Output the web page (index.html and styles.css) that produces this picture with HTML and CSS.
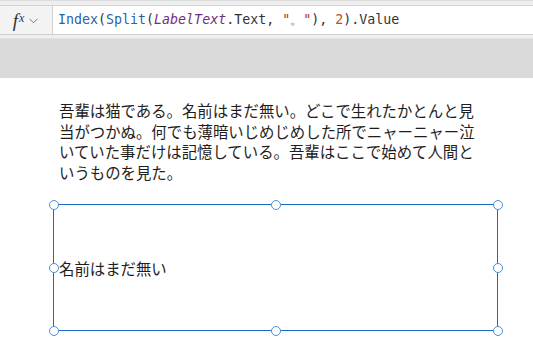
FILE: index.html
```html
<!DOCTYPE html>
<html lang="ja">
<head>
  <meta charset="UTF-8" />
  <meta name="viewport" content="width=device-width, initial-scale=1.0"/>
  <title>Formula</title>
  <link rel="stylesheet" href="styles.css">
</head>
<body>
  <div class="top-strip"></div>

  <div class="formula-bar">
    <div class="fx-button">
      <span class="fx"><span class="fx-f">f</span><span class="fx-x">x</span></span>
      <svg class="chevron" width="9" height="6" viewBox="0 0 9 6">
        <path d="M0.5 0.8 L4.5 4.8 L8.5 0.8" fill="none" stroke="#777" stroke-width="1"/>
      </svg>
    </div>
    <div class="formula-input">
      <span class="fn">Index</span>(<span class="fn">Split</span>(<span class="ctl">LabelText</span>.Text, <span class="str">"。"</span>), <span class="num">2</span>).Value
    </div>
  </div>

  <div class="gap-strip"></div>
  <div class="toolbar-area"></div>

  <div class="canvas">
    <p class="label-text">吾輩は猫である。名前はまだ無い。どこで生れたかとんと見当がつかぬ。何でも薄暗いじめじめした所でニャーニャー泣いていた事だけは記憶している。吾輩はここで始めて人間というものを見た。</p>

    <div class="selected-label">
      <span class="label-value">名前はまだ無い</span>
      <span class="handle tl"></span>
      <span class="handle tc"></span>
      <span class="handle tr"></span>
      <span class="handle ml"></span>
      <span class="handle mr"></span>
      <span class="handle bl"></span>
      <span class="handle bc"></span>
      <span class="handle br"></span>
    </div>
  </div>
</body>
</html>
```

FILE: styles.css
```css
html, body {
  height: 100%;
}
body {
  margin: 0;
  background: #fff;
  font-family: "Noto Sans CJK JP", "Noto Sans", sans-serif;
  color: #222;
}
.top-strip {
  height: 4px;
  background: #efefef;
  border-top: 1px solid #dcdcdc;
  border-bottom: 1px solid #d4d4d4;
}
.formula-bar {
  display: flex;
  height: 28px;
  background: #f3f3f3;
  border-bottom: 1px solid #d0d0d0;
}
.fx-button {
  width: 52px;
  display: flex;
  align-items: center;
  justify-content: center;
  gap: 5px;
  padding-right: 1px;
  box-sizing: border-box;
}
.fx {
  display: flex;
  align-items: flex-start;
  font-family: "Liberation Serif", serif;
  font-style: italic;
  color: #333;
  line-height: 1;
}
.fx-f {
  font-size: 19px;
}
.fx-x {
  font-size: 12px;
  margin-left: 1px;
  margin-top: 1px;
}
.chevron {
  margin-top: 1px;
}
.formula-input {
  flex: 1;
  background: #fff;
  border-left: 1px solid #cfcfcf;
  padding-left: 5px;
  font-family: "DejaVu Sans Mono", monospace;
  font-size: 13.3px;
  line-height: 28px;
  color: #333;
  white-space: nowrap;
}
.fn {
  color: #2c62a8;
}
.ctl {
  color: #74307f;
  font-style: italic;
}
.str {
  color: #b0312a;
}
.num {
  color: #c0501f;
}
.gap-strip {
  height: 3px;
  background: #efefef;
  border-bottom: 1px solid #e2e2e2;
}
.toolbar-area {
  height: 39px;
  background: #dadada;
}
.canvas {
  padding: 22px 0 20px 53px;
}
.label-text {
  margin: 0 0 0 6px;
  width: 420px;
  font-size: 15.4px;
  line-height: 20.6px;
  color: #1e1e1e;
}
.selected-label {
  position: relative;
  margin-top: 22px;
  width: 445px;
  height: 127px;
  border: 1px solid #1a6cc0;
  box-sizing: border-box;
  display: flex;
  align-items: center;
  padding-left: 5px;
}
.label-value {
  font-size: 15.4px;
  color: #1e1e1e;
}
.handle {
  position: absolute;
  width: 10px;
  height: 10px;
  border: 1.5px solid #4a8fd8;
  border-radius: 50%;
  background: #fff;
  box-sizing: border-box;
}
.tl, .tc, .tr { top: -5.5px; }
.ml, .mr { top: calc(50% - 5px); }
.bl, .bc, .br { bottom: -5.5px; }
.tl, .ml, .bl { left: -5.5px; }
.tc, .bc { left: calc(50% - 5px); }
.tr, .mr, .br { right: -5.5px; }
```
